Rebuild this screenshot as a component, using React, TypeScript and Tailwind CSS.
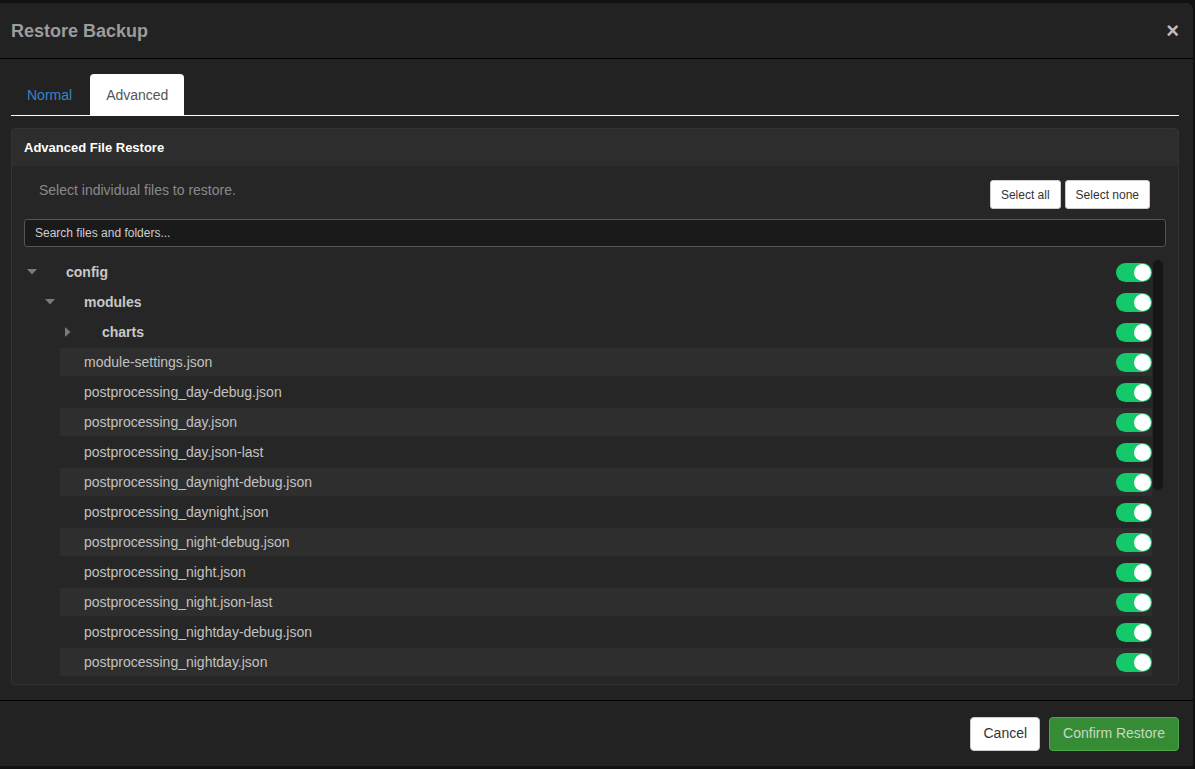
import React from 'react';

type Node = {
  name: string;
  depth: number;
  folder?: 'open' | 'closed';
};

const tree: Node[] = [
  { name: 'config', depth: 0, folder: 'open' },
  { name: 'modules', depth: 1, folder: 'open' },
  { name: 'charts', depth: 2, folder: 'closed' },
  { name: 'module-settings.json', depth: 2 },
  { name: 'postprocessing_day-debug.json', depth: 2 },
  { name: 'postprocessing_day.json', depth: 2 },
  { name: 'postprocessing_day.json-last', depth: 2 },
  { name: 'postprocessing_daynight-debug.json', depth: 2 },
  { name: 'postprocessing_daynight.json', depth: 2 },
  { name: 'postprocessing_night-debug.json', depth: 2 },
  { name: 'postprocessing_night.json', depth: 2 },
  { name: 'postprocessing_night.json-last', depth: 2 },
  { name: 'postprocessing_nightday-debug.json', depth: 2 },
  { name: 'postprocessing_nightday.json', depth: 2 },
];

const Toggle: React.FC = () => (
  <div className="flex h-[19px] w-[36px] shrink-0 items-center justify-end rounded-full bg-[#14c96a] pr-px">
    <div className="h-[17px] w-[17px] rounded-full bg-white" />
  </div>
);

const Caret: React.FC<{ open: boolean }> = ({ open }) =>
  open ? (
    <svg width="10" height="6" viewBox="0 0 10 6" className="block">
      <path d="M0 0 L10 0 L5 5.5 Z" fill="#7a7a7a" />
    </svg>
  ) : (
    <svg width="6" height="10" viewBox="0 0 6 10" className="block">
      <path d="M0 0 L5.5 5 L0 10 Z" fill="#7a7a7a" />
    </svg>
  );

const Row: React.FC<{ node: Node; index: number }> = ({ node, index }) => {
  const indent = node.depth * 18;
  if (node.folder) {
    return (
      <div className="flex h-[30px] items-center pr-[14px]" style={{ paddingLeft: indent }}>
        <div className="flex w-[42px] shrink-0 items-center pl-[2px]">
          <div className="flex w-[12px] justify-center">
            <Caret open={node.folder === 'open'} />
          </div>
        </div>
        <span className="flex-1 text-[14px] font-bold text-[#c8c8c8]">{node.name}</span>
        <Toggle />
      </div>
    );
  }
  const light = index % 2 === 1;
  return (
    <div className="h-[30px] py-px pr-[14px]" style={{ paddingLeft: indent }}>
      <div className={`flex h-[28px] items-center pl-[24px] ${light ? 'bg-[#2e2e2e]' : ''}`}>
        <span className="flex-1 text-[14px] text-[#c2c2c2]">{node.name}</span>
        <Toggle />
      </div>
    </div>
  );
};

export default function App() {
  return (
    <div
      className="h-screen overflow-hidden bg-[#111111] pt-[3px]"
      style={{ fontFamily: '"Liberation Sans", Arial, sans-serif' }}
    >
      <div className="flex h-[763px] w-[1193px] flex-col rounded-tr-[6px] bg-[#222222]">
        <div className="flex h-[56px] shrink-0 items-center justify-between border-b border-black pl-[11px] pr-[14px]">
          <h1 className="pt-[2px] text-[18px] font-bold text-[#9c9c9c]">Restore Backup</h1>
          <span className="text-[22px] font-bold leading-none text-[#bdbdbd]">×</span>
        </div>

        <div className="flex flex-1 flex-col pb-[15px] pl-[11px] pr-[14px] pt-[15px]">
          <div className="flex h-[42px] items-end border-b border-white">
            <div className="flex h-[41px] items-center px-[16px] pt-px text-[14px] text-[#3a84c4]">Normal</div>
            <div className="ml-[2px] flex h-[41px] items-center rounded-t-[4px] bg-white px-[16px] pt-px text-[14px] text-[#555555]">
              Advanced
            </div>
          </div>

          <div className="mt-[12px] flex flex-1 flex-col overflow-hidden rounded-[4px] border border-[#333333] bg-[#262626]">
            <div className="flex h-[37px] shrink-0 items-center bg-[#2d2d2d] px-[12px] text-[13px] font-bold text-white">
              Advanced File Restore
            </div>
            <div className="flex flex-1 flex-col px-[12px] pb-[7px]">
              <div className="mt-[14px] flex items-start justify-between pl-[15px] pr-[16px]">
                <p className="text-[14px] leading-[20px] text-[#8a8a8a]">Select individual files to restore.</p>
                <div className="flex gap-[4px]">
                  <button className="h-[29px] rounded-[3px] border border-[#cccccc] bg-white px-[10px] text-[12px] text-[#333333]">
                    Select all
                  </button>
                  <button className="h-[29px] rounded-[3px] border border-[#cccccc] bg-white px-[10px] text-[12px] text-[#333333]">
                    Select none
                  </button>
                </div>
              </div>
              <div className="mt-[10px] flex h-[28px] items-center rounded-[3px] border border-[#555555] bg-[#1a1a1a] px-[10px] text-[12px] text-[#cfcfcf]">
                Search files and folders...
              </div>
              <div className="relative mt-[10px] h-[420px] overflow-hidden">
                {tree.map((node, i) => (
                  <Row key={node.name} node={node} index={i} />
                ))}
                <div className="absolute right-[3px] top-[3px] h-[230px] w-[10px] rounded-full bg-[#161616]" />
              </div>
            </div>
          </div>
        </div>

        <div className="flex h-[66px] shrink-0 items-center justify-end gap-[9px] border-t border-black pr-[14px]">
          <button className="h-[34px] rounded-[4px] border border-[#cccccc] bg-white px-[12px] text-[14px] text-[#333333]">
            Cancel
          </button>
          <button className="h-[34px] rounded-[4px] border border-[#4ea84a] bg-[#368c35] px-[13px] text-[14px] text-[#c7d9c5]">
            Confirm Restore
          </button>
        </div>
      </div>
    </div>
  );
}
